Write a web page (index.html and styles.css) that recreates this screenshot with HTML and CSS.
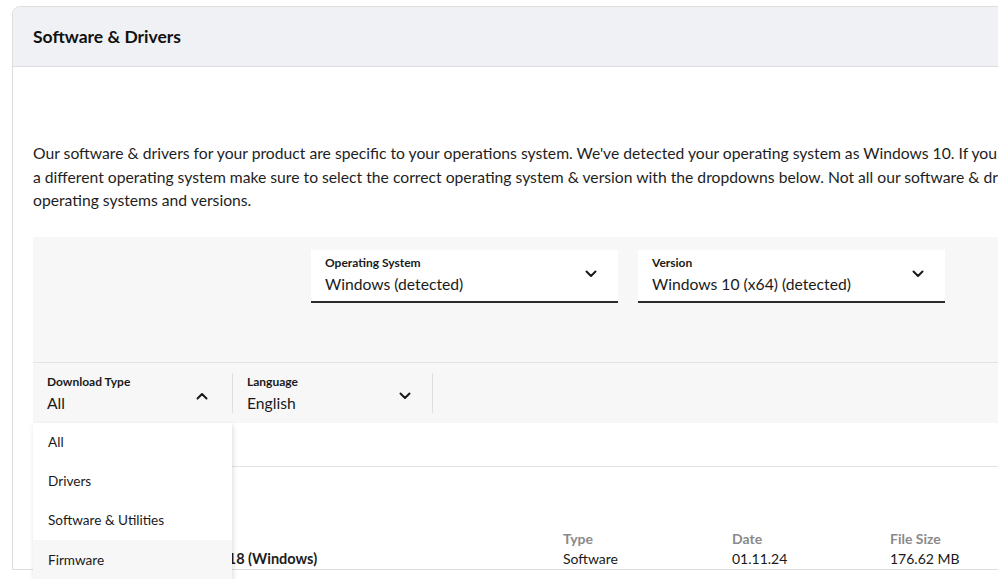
FILE: index.html
```html
<!DOCTYPE html>
<html lang="en">
<head>
<meta charset="utf-8">
<title>Software &amp; Drivers</title>
<link rel="stylesheet" href="styles.css">
</head>
<body>
<section class="card">
  <header class="card-header">
    <h2 class="card-title">Software &amp; Drivers</h2>
  </header>
  <div class="card-body">
    <p class="intro">Our software &amp; drivers for your product are specific to your operations system. We've detected your operating system as Windows 10. If you have<br>a different operating system make sure to select the correct operating system &amp; version with the dropdowns below. Not all our software &amp; drivers support all<br>operating systems and versions.</p>

    <div class="filters">
      <div class="os-row">
        <div class="select select-boxed">
          <div class="select-text">
            <span class="select-label">Operating System</span>
            <span class="select-value">Windows (detected)</span>
          </div>
          <svg class="chevron" viewBox="0 0 12 8" aria-hidden="true"><path d="M1.5 1.5 6 6l4.5-4.5"/></svg>
        </div>
        <div class="select select-boxed">
          <div class="select-text">
            <span class="select-label">Version</span>
            <span class="select-value">Windows 10 (x64) (detected)</span>
          </div>
          <svg class="chevron" viewBox="0 0 12 8" aria-hidden="true"><path d="M1.5 1.5 6 6l4.5-4.5"/></svg>
        </div>
      </div>

      <div class="type-row">
        <div class="select select-cell">
          <div class="select-text">
            <span class="select-label">Download Type</span>
            <span class="select-value">All</span>
          </div>
          <svg class="chevron" viewBox="0 0 12 8" aria-hidden="true"><path d="M1.5 6.5 6 2l4.5 4.5"/></svg>
        </div>
        <div class="select select-cell select-lang">
          <div class="select-text">
            <span class="select-label">Language</span>
            <span class="select-value">English</span>
          </div>
          <svg class="chevron" viewBox="0 0 12 8" aria-hidden="true"><path d="M1.5 1.5 6 6l4.5-4.5"/></svg>
        </div>

        <ul class="menu">
          <li class="menu-item">All</li>
          <li class="menu-item">Drivers</li>
          <li class="menu-item">Software &amp; Utilities</li>
          <li class="menu-item is-hover">Firmware</li>
        </ul>
      </div>
    </div>

    <div class="results-bar"></div>

    <div class="result">
      <div class="result-title">Logitech Options+ 1.70.55118 (Windows)</div>
      <div class="result-col">
        <span class="col-label">Type</span>
        <span class="col-value">Software</span>
      </div>
      <div class="result-col">
        <span class="col-label">Date</span>
        <span class="col-value">01.11.24</span>
      </div>
      <div class="result-col">
        <span class="col-label">File Size</span>
        <span class="col-value">176.62 MB</span>
      </div>
    </div>
  </div>
</section>
</body>
</html>
```

FILE: styles.css
```css
html, body {
  margin: 0;
  padding: 0;
  background: #ffffff;
  overflow: hidden;
  height: 100%;
}

body {
  font-family: "Lato", "Liberation Sans", Arial, sans-serif;
  color: #1c1c1c;
}

.card {
  margin: 6px 0 0 12px;
  width: 1200px;
  border: 1px solid #dedede;
  border-top-left-radius: 8px;
  background: #fff;
}

.card-header {
  height: 59px;
  display: flex;
  align-items: center;
  padding-left: 20px;
  background: #eff1f4;
  border-bottom: 1px solid #dedede;
  border-top-left-radius: 8px;
}

.card-title {
  margin: 0;
  font-size: 17.5px;
  font-weight: 700;
  color: #111;
}

.card-body {
  padding-left: 20px;
}

.intro {
  margin: 75px 0 0;
  white-space: nowrap;
  font-size: 15.7px;
  line-height: 23.5px;
  color: #1e1e1e;
}

.filters {
  margin-top: 24px;
  background: #f7f7f7;
}

.os-row {
  height: 125px;
  box-sizing: border-box;
  padding: 13px 0 0 278px;
  display: flex;
  gap: 20px;
  align-items: flex-start;
}

.select {
  display: flex;
  align-items: center;
  justify-content: space-between;
  box-sizing: border-box;
}

.select-text {
  display: flex;
  flex-direction: column;
}

.select-label {
  font-size: 12px;
  font-weight: 700;
  line-height: 13px;
  color: #1a1a1a;
}

.select-value {
  font-size: 15.7px;
  line-height: 22px;
  margin-top: 4px;
  color: #1a1a1a;
}

.chevron {
  width: 12px;
  height: 8px;
  flex: none;
  fill: none;
  stroke: #1a1a1a;
  stroke-width: 2;
  stroke-linecap: round;
  stroke-linejoin: round;
}

.select-boxed {
  width: 307px;
  height: 53px;
  padding: 7px 21px 6px 14px;
  background: #fff;
  border-bottom: 2px solid #2b2b2b;
}

.select-boxed .chevron {
  margin-top: -3px;
}

.type-row {
  position: relative;
  display: flex;
  height: 61px;
  box-sizing: border-box;
  padding: 10px 0;
  border-top: 1px solid #e3e3e3;
}

.select-cell {
  width: 200px;
  padding: 2px 24px 0 14px;
  border-right: 1px solid #dedede;
  align-items: flex-start;
}

.select-cell .chevron {
  margin-top: 17px;
}

.select-lang {
  padding-right: 21px;
}

.menu {
  position: absolute;
  left: 0;
  top: 60px;
  width: 199px;
  margin: 0;
  padding: 0;
  list-style: none;
  background: #fff;
  box-shadow: 1px 2px 5px rgba(0, 0, 0, 0.14);
  z-index: 2;
}

.menu-item {
  height: 39.5px;
  display: flex;
  align-items: center;
  padding-left: 15px;
  font-size: 13.6px;
  color: #1a1a1a;
}

.menu-item:first-child {
  height: 38.5px;
}

.menu-item.is-hover {
  background: #f7f7f7;
}

.results-bar {
  height: 43px;
  border-bottom: 1px solid #e3e3e3;
}

.result {
  display: grid;
  grid-template-columns: 515px 169px 158px 1fr;
  padding: 62px 0 0 15px;
  align-items: end;
}

.result-title {
  font-size: 14.5px;
  font-weight: 700;
  line-height: 20px;
  white-space: nowrap;
}

.result-col {
  display: flex;
  flex-direction: column;
}

.col-label {
  font-size: 14px;
  line-height: 20px;
  color: #8a8a8a;
  font-weight: 700;
}

.col-value {
  font-size: 14px;
  line-height: 20px;
  color: #1a1a1a;
}
```
